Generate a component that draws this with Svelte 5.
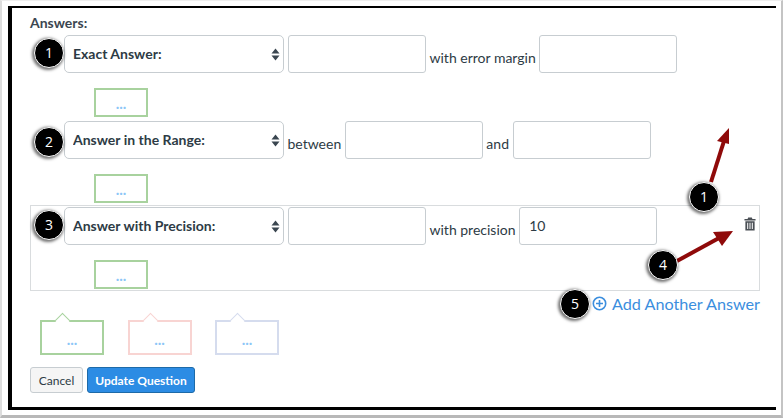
<script>
const answers = [
	{ type: "Exact Answer:", parts: [{ input: "" }, { text: "with error margin" }, { input: "" }] },
	{ type: "Answer in the Range:", parts: [{ text: "between" }, { input: "" }, { text: "and" }, { input: "" }] },
	{ type: "Answer with Precision:", parts: [{ input: "" }, { text: "with precision" }, { input: "10" }], boxed: true }
];
const badges = [
	{ n: 1, x: 49, y: 53 },
	{ n: 2, x: 49, y: 142 },
	{ n: 3, x: 49, y: 225 },
	{ n: 1, x: 704, y: 197 },
	{ n: 4, x: 663, y: 265 },
	{ n: 5, x: 575, y: 304 }
];
const bubbles = ["green", "pink", "blue"];
</script>

<div class="outer">
	<div class="panel">
		<div class="heading">Answers:</div>

		{#each answers as a}
			<div class="answer" class:boxed={a.boxed}>
				<div class="row">
					<div class="select">
						<select>
							<option>{a.type}</option>
						</select>
						<svg class="updown" width="9" height="13" viewBox="0 0 9 13">
							<path d="M4.5 0.5 L8.5 5.5 L0.5 5.5 Z M0.5 7.5 L8.5 7.5 L4.5 12.5 Z" fill="#3a4650" />
						</svg>
					</div>
					{#each a.parts as p}
						{#if p.text}
							<span class="label">{p.text}</span>
						{:else}
							<input type="text" value={p.input} />
						{/if}
					{/each}
				</div>
				<div class="comment">...</div>
				{#if a.boxed}
					<svg class="trash" width="12" height="14" viewBox="0 0 13 15">
						<path d="M4.5 0.5h4l.6 1.5h3.4v1.6H.5V2h3.4z M1.5 4.6h10V14.5h-10z" fill="#4a4f55" />
						<path d="M4 6.2v6.6M6.5 6.2v6.6M9 6.2v6.6" stroke="#fff" stroke-width="1.1" />
					</svg>
				{/if}
			</div>
		{/each}

		<div class="add">
			<svg width="15" height="15" viewBox="0 0 15 15">
				<circle cx="7.5" cy="7.5" r="6.2" fill="none" stroke="#3b8ede" stroke-width="1.6" />
				<path d="M7.5 4v7M4 7.5h7" stroke="#3b8ede" stroke-width="1.6" />
			</svg>
			<span>Add Another Answer</span>
		</div>

		<div class="bubbles">
			{#each bubbles as b}
				<div class="bubble {b}">...</div>
			{/each}
		</div>

		<div class="buttons">
			<button class="cancel">Cancel</button>
			<button class="update">Update Question</button>
		</div>
	</div>

	<svg class="arrows" width="783" height="418" viewBox="0 0 783 418">
		<path d="M711 182 L724 141" stroke="#8f0a0a" stroke-width="4" fill="none" />
		<path d="M729 128 L729 144 L717 141 Z" fill="#8f0a0a" />
		<path d="M677 261 L719 238" stroke="#8f0a0a" stroke-width="4" fill="none" />
		<path d="M733 231 L713 232 L722 246 Z" fill="#8f0a0a" />
	</svg>

	{#each badges as b}
		<div class="badge" style="left:{b.x}px;top:{b.y}px">{b.n}</div>
	{/each}
</div>

<style>
:global(body) {
	background: #fff;
}

.outer {
	position: relative;
	box-sizing: border-box;
	width: 783px;
	height: 418px;
	padding: 5px 0 0 6px;
	overflow: hidden;
	background: #fff;
	border-top: 1px solid #eee;
	border-left: 2px solid #ddd;
	border-right: 2px solid #c4c4c4;
	border-bottom: 3px solid #b8b8b8;
	font-family: Lato, "Liberation Sans", sans-serif;
	color: #2d3b45;
}

.panel {
	box-sizing: border-box;
	width: 768px;
	height: 404px;
	padding-left: 18px;
	border-top: 2px solid #000;
	border-left: 4px solid #000;
	border-bottom: 3px solid #000;
}

.heading {
	height: 25px;
	padding-top: 6px;
	box-sizing: border-box;
	font-size: 14px;
	font-weight: 700;
	line-height: 18px;
	color: #3b4650;
}

.answer {
	position: relative;
	box-sizing: border-box;
	width: 730px;
	height: 86px;
	padding: 2px 0 0 34px;
}

.answer.boxed {
	padding: 1px 0 0 33px;
	border: 1px solid #d9dcde;
}

.row {
	display: flex;
	align-items: center;
	height: 38px;
	gap: 4px;
}

.select {
	position: relative;
	flex: none;
	width: 220px;
	height: 38px;
}

select {
	appearance: none;
	box-sizing: border-box;
	width: 100%;
	height: 100%;
	padding: 0 24px 2px 8px;
	background: #fff;
	border: 1px solid #c7cdd1;
	border-radius: 5px;
	font: 700 14px Lato, sans-serif;
	color: #2d3b45;
}

.updown {
	position: absolute;
	right: 4px;
	top: 13px;
}

input {
	flex: none;
	box-sizing: border-box;
	width: 138px;
	height: 38px;
	padding: 0 9px 2px;
	background: #fff;
	border: 1px solid #c7cdd1;
	border-radius: 3px;
	font: 14px Lato, sans-serif;
	color: #2d3b45;
}

.label {
	flex: none;
	margin: 0 -0.35px 0 -0.5px;
	padding: 6px 0 0;
	font-size: 14px;
}

.comment {
	box-sizing: border-box;
	width: 54px;
	height: 29px;
	margin: 15px 0 0 30px;
	padding-top: 4px;
	border: 2px solid #a8d29e;
	text-align: center;
	font-size: 15px;
	line-height: 18px;
	font-weight: 700;
	color: #8cc6f7;
}

.trash {
	position: absolute;
	right: 3px;
	top: 11px;
}

.add {
	display: flex;
	justify-content: flex-end;
	align-items: center;
	gap: 5px;
	width: 730px;
	height: 26px;
	padding-bottom: 2px;
	box-sizing: border-box;
	font-size: 16.2px;
	color: #3b8ede;
}

.bubbles {
	display: flex;
	height: 38px;
	padding: 3px 0 0 10px;
	box-sizing: border-box;
}

.bubble {
	position: relative;
	box-sizing: border-box;
	width: 64px;
	height: 35px;
	margin-right: 23.5px;
	padding-top: 8px;
	border: 2px solid;
	text-align: center;
	font-size: 15px;
	line-height: 18px;
	font-weight: 700;
	color: #8cc6f7;
}

.bubble::before {
	content: "";
	position: absolute;
	left: 15px;
	top: -7px;
	width: 10px;
	height: 10px;
	background: #fff;
	border-top: 1.5px solid;
	border-left: 1.5px solid;
	border-color: inherit;
	transform: rotate(45deg);
}

.green {
	border-color: #a8d29e;
}

.pink {
	border-color: #f8d4d2;
}

.blue {
	border-color: #d5dcee;
}

.buttons {
	display: flex;
	gap: 4px;
	margin-top: 12px;
}

button {
	box-sizing: border-box;
	height: 26px;
	padding: 0;
	border-radius: 3px;
	font: 12px Lato, sans-serif;
}

.cancel {
	width: 53px;
	background: #f5f5f5;
	border: 1px solid #c7cdd1;
	color: #2d3b45;
}

.update {
	width: 108px;
	background: #2c8ce4;
	border: 1px solid #1d6aa8;
	color: #fff;
	font-weight: 700;
}

.arrows {
	position: absolute;
	left: -2px;
	top: -1px;
}

.badge {
	position: absolute;
	box-sizing: border-box;
	width: 30px;
	height: 30px;
	margin: -16px 0 0 -17px;
	background: #000;
	border: 1px solid #fff;
	border-radius: 50%;
	box-shadow: -1px 1px 3px 1px rgba(0, 0, 0, 0.55);
	text-align: center;
	font: 14px/27px "Open Sans", sans-serif;
	color: #fff;
}
</style>
